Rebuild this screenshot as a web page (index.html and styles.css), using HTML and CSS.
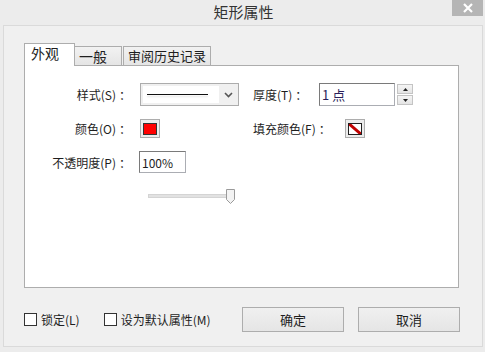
FILE: index.html
```html
<!DOCTYPE html>
<html lang="zh-CN">
<head>
    <meta charset="UTF-8">
    <title>矩形属性</title>
    <link rel="stylesheet" href="styles.css">
</head>
<body>
    <div class="dialog">
        <div class="titlebar">
            <span class="title">矩形属性</span>
            <button class="close-btn">
                <svg width="12" height="10" viewBox="0 0 12 10"><path d="M2 1 L10 9 M10 1 L2 9" stroke="#fff" stroke-width="2.2"/></svg>
            </button>
        </div>

        <div class="frame">
            <div class="tabs">
                <div class="tab active">外观</div>
                <div class="tab tab-general">一般</div>
                <div class="tab tab-history">审阅历史记录</div>
            </div>

            <div class="panel">
                <div class="row row-style">
                    <div class="label">样式(S)<span class="colon">：</span></div>
                    <div class="cell">
                        <div class="combo">
                            <div class="combo-value"><span class="line"></span></div>
                            <div class="combo-arrow">
                                <svg width="9" height="6" viewBox="0 0 9 6"><path d="M1 1 L4.5 4.5 L8 1" fill="none" stroke="#555" stroke-width="1.6"/></svg>
                            </div>
                        </div>
                    </div>
                    <div class="label-right">厚度(T)<span class="colon">：</span></div>
                    <div class="spin-field">
                        <input class="text-input thickness" type="text" value="1 点">
                        <div class="spin">
                            <div class="spin-btn"><svg width="5" height="3" viewBox="0 0 5 3"><path d="M0 3 L2.5 0 L5 3Z" fill="#222"/></svg></div>
                            <div class="spin-btn"><svg width="5" height="3" viewBox="0 0 5 3"><path d="M0 0 L2.5 3 L5 0Z" fill="#222"/></svg></div>
                        </div>
                    </div>
                </div>

                <div class="row row-color">
                    <div class="label">颜色(O)<span class="colon">：</span></div>
                    <div class="cell">
                        <div class="swatch-btn"><span class="swatch red"></span></div>
                    </div>
                    <div class="label-right fill-label">填充颜色(F)<span class="colon">：</span></div>
                    <div class="swatch-btn">
                        <span class="swatch none">
                            <svg width="14" height="12" viewBox="0 0 14 12"><path d="M0 0 L14 12" stroke="#c00000" stroke-width="3"/></svg>
                        </span>
                    </div>
                </div>

                <div class="row row-opacity">
                    <div class="label">不透明度(P)<span class="colon">：</span></div>
                    <div class="cell">
                        <input class="text-input opacity" type="text" value="100%">
                    </div>
                </div>

                <div class="row row-slider">
                    <div class="slider">
                        <div class="track"></div>
                        <svg class="thumb" width="9" height="15" viewBox="0 0 9 15"><path d="M0.5 0.5 H8.5 V10.5 L4.5 14.5 L0.5 10.5 Z" fill="#f3f3f3" stroke="#9a9a9a"/></svg>
                    </div>
                </div>
            </div>

            <div class="footer">
                <label class="check"><span class="box"></span>锁定(L)</label>
                <label class="check check-default"><span class="box"></span>设为默认属性(M)</label>
                <button class="btn btn-ok">确定</button>
                <button class="btn btn-cancel">取消</button>
            </div>
        </div>
    </div>
</body>
</html>
```

FILE: styles.css
```css
body {
    margin: 0;
    padding: 0;
    background-color: #ececec;
    font-family: "Noto Sans CJK SC", "Noto Sans", sans-serif;
    font-size: 12px;
    color: #1e1e1e;
}

.dialog {
    width: 485px;
    height: 352px;
    display: flex;
    flex-direction: column;
}

.titlebar {
    height: 25px;
    position: relative;
    display: flex;
    justify-content: center;
    align-items: center;
}

.title {
    font-size: 15px;
    color: #333;
    margin-top: -2px;
    padding-left: 2px;
}

.close-btn {
    position: absolute;
    top: 0;
    right: 2px;
    width: 31px;
    height: 16px;
    border: none;
    padding: 0;
    background-color: #b5b5b5;
    display: flex;
    align-items: center;
    justify-content: center;
}

.frame {
    margin: 0 2px 0 3px;
    height: 322px;
    border: 1px solid #dadada;
    background-color: #f0f0f0;
    padding: 17px 22px 0 20px;
    box-sizing: border-box;
}

.tabs {
    display: flex;
    align-items: flex-end;
    height: 22px;
    position: relative;
    z-index: 1;
}

.tab {
    height: 19px;
    border: 1px solid #adadad;
    border-bottom: none;
    background: linear-gradient(#f2f2f2, #e5e5e5);
    box-sizing: border-box;
    padding: 0 4px;
    line-height: 18px;
    font-size: 13px;
}

.tab.active {
    height: 23px;
    width: 51px;
    background: #fff;
    padding: 0 6px;
    line-height: 18px;
    margin-bottom: -1px;
    font-size: 14px;
}

.tab-general {
    width: 47px;
    border-left: none;
    font-size: 14px;
}

.tab-history {
    width: 88px;
    margin-left: 1px;
}

.panel {
    width: 435px;
    height: 223px;
    border: 1px solid #adadad;
    background-color: #fff;
    box-sizing: border-box;
    padding-top: 17px;
}

.row {
    display: flex;
    align-items: center;
}

.label {
    width: 106px;
    text-align: right;
    padding-right: 9px;
    white-space: nowrap;
}

/* the colon sits a bit further right in the original UI font */
.colon {
    padding-left: 3px;
}

.cell {
    width: 113px;
}

.label-right {
    width: 66px;
    white-space: nowrap;
}

.fill-label {
    width: 92px;
}

.combo {
    width: 99px;
    height: 23px;
    border: 1px solid #acacac;
    box-sizing: border-box;
    display: flex;
    background-color: #f0f0f0;
}

.combo-value {
    width: 76px;
    margin: 2px 0 2px 2px;
    background-color: #fff;
    display: flex;
    align-items: center;
    padding-left: 4px;
    box-sizing: border-box;
}

.line {
    width: 61px;
    height: 1px;
    background-color: #111;
    box-shadow: 0 2px 2px rgba(0, 0, 0, 0.12);
}

.combo-arrow {
    flex: 1;
    display: flex;
    align-items: center;
    justify-content: center;
}

.spin-field {
    display: flex;
    align-items: center;
}

.text-input {
    font-family: inherit;
    font-size: 12px;
    color: #1e1e1e;
    border: 1px solid #abadb3;
    border-top-color: #7a7a7a;
    border-left-color: #7a7a7a;
    padding: 0 2px;
    box-sizing: border-box;
    outline: none;
}

.thickness {
    width: 76px;
    height: 23px;
    color: #2a1f5a;
    font-size: 13px;
}

.spin {
    margin-left: 2px;
    display: flex;
    flex-direction: column;
    gap: 1px;
}

.spin-btn {
    width: 16px;
    height: 10px;
    border: 1px solid #c4c4c4;
    background: linear-gradient(#f5f5f5, #e4e4e4);
    box-sizing: border-box;
    display: flex;
    align-items: center;
    justify-content: center;
}

.row-color {
    margin-top: 13px;
}

.swatch-btn {
    width: 20px;
    height: 19px;
    border: 1px solid #adadad;
    background-color: #ececec;
    box-sizing: border-box;
    display: flex;
    align-items: center;
    justify-content: center;
}

.swatch {
    width: 14px;
    height: 12px;
    box-sizing: border-box;
    border: 1px solid #333;
    display: block;
}

.swatch.red {
    background-color: #ff0000;
}

.swatch.none {
    background-color: #fff;
    overflow: hidden;
    border-color: #222;
}

.swatch.none svg {
    display: block;
    margin: -1px;
}

.row-opacity {
    margin-top: 13px;
}

.opacity {
    width: 47px;
    height: 22px;
    margin-left: -1px;
}

.row-slider {
    margin-top: 16px;
    padding-left: 123px;
}

.slider {
    width: 88px;
    height: 15px;
    position: relative;
}

.track {
    margin-top: 5px;
    width: 86px;
    height: 4px;
    background-color: #e2e2e2;
    border: 1px solid #d4d4d4;
    box-sizing: border-box;
}

.thumb {
    position: absolute;
    left: 78px;
    top: 0;
}

.footer {
    display: flex;
    align-items: center;
    margin-top: 19px;
    height: 25px;
}

.check {
    display: flex;
    align-items: center;
    white-space: nowrap;
}

.box {
    width: 13px;
    height: 13px;
    border: 1px solid #333;
    background-color: #fff;
    box-sizing: border-box;
    margin-right: 4px;
}

.check-default {
    margin-left: 24px;
}

.btn {
    height: 25px;
    width: 102px;
    border: 1px solid #adadad;
    background: linear-gradient(#f0f0f0, #e5e5e5);
    font-family: inherit;
    font-size: 13px;
    color: #1e1e1e;
    padding: 0;
    box-sizing: border-box;
}

.btn-ok {
    margin-left: auto;
}

.btn-cancel {
    margin-left: 14px;
}
```
